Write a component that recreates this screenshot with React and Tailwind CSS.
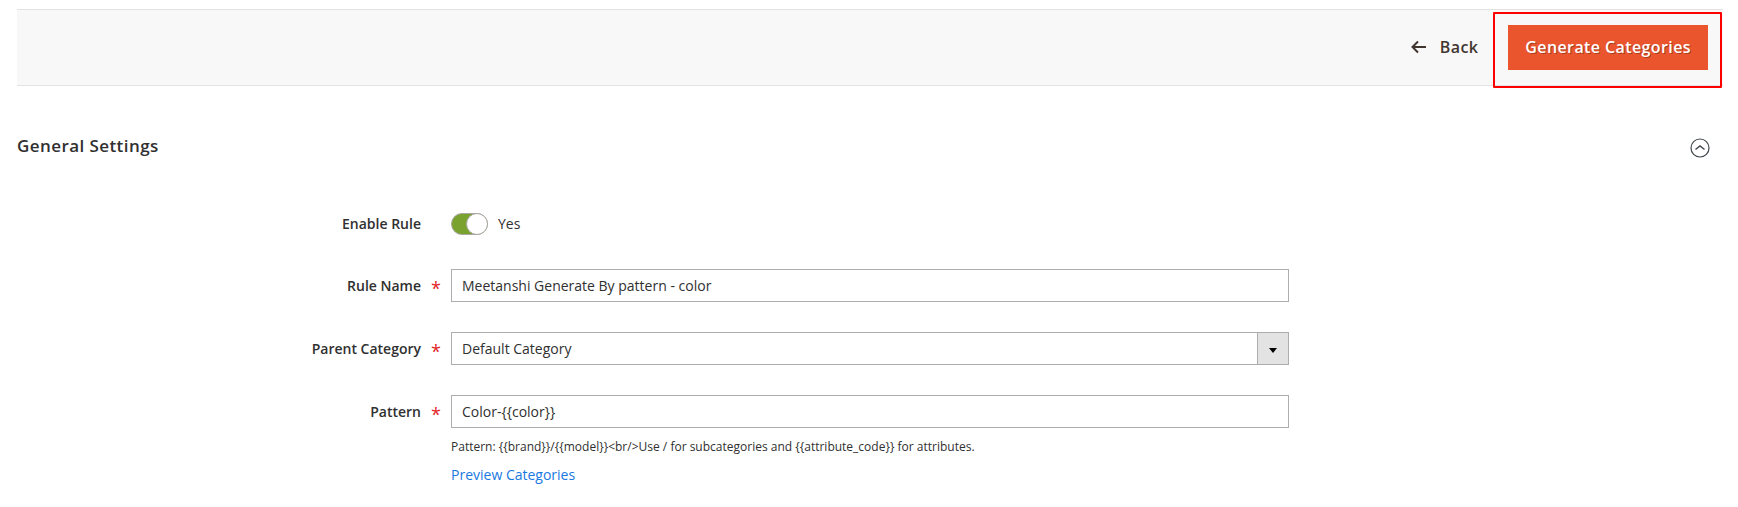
import React, { useState } from "react";

// Label column, control column and an empty column on the right
const Field = ({ id, label, required, children }) => (
  <div className="grid grid-cols-[217fr_419fr_217fr]">
    <label
      htmlFor={id}
      className={`flex items-center justify-end text-sm font-semibold ${
        required ? "h-[33px]" : "h-[30px]"
      }`}
    >
      {label}
      <span className="w-[30px] pt-1 text-center text-lg font-medium text-[#e22626]">
        {required ? "*" : ""}
      </span>
    </label>
    <div>{children}</div>
  </div>
);

const inputClass =
  "block h-[33px] w-full rounded-none border border-[#adadad] bg-white px-[10px] text-sm text-[#303030] focus:border-[#007bdb] focus:outline-none";

const App = () => {
  const [open, setOpen] = useState(true);
  const [enabled, setEnabled] = useState(true);
  const [name, setName] = useState("Meetanshi Generate By pattern - color");
  const [pattern, setPattern] = useState("Color-{{color}}");

  return (
    <div className="min-h-screen bg-white pt-[9px] pr-[15px] pb-6 pl-[17px] font-['Open_Sans',sans-serif] text-[#303030]">
      {/* Page actions */}
      <header className="flex items-center justify-end gap-[30px] border-y border-[#e3e3e3] bg-[#f8f8f8] py-[15px] pr-[15px]">
        <button
          type="button"
          className="flex items-center gap-[14px] pb-[2px] text-base font-semibold tracking-wide text-[#41362f]"
        >
          <svg width="15" height="14" viewBox="0 0 15 14" fill="none" stroke="currentColor" strokeWidth="2">
            <path d="M7 1.500 1.500 7 7 12.500M1.500 7H15" />
          </svg>
          Back
        </button>
        <div className="relative">
          <button
            type="button"
            className="block h-[45px] bg-[#eb552d] px-[17px] pb-[2px] text-base font-semibold tracking-wide text-white [text-shadow:1px_1px_0_rgba(0,0,0,0.3)]"
          >
            Generate Categories
          </button>
          <div className="pointer-events-none absolute -top-[13px] -right-[14px] -bottom-[18px] -left-[15px] rounded-[1px] border-2 border-[#ff0000]" />
        </div>
      </header>

      {/* General settings */}
      <section>
        <div className="mt-12 flex items-center justify-between pr-[13px]">
          <h2 className="text-[17px] leading-6 font-semibold tracking-wide">
            General Settings
          </h2>
          <button
            type="button"
            aria-label="Toggle General Settings"
            className="pt-1"
            onClick={() => setOpen(!open)}
          >
            <svg width="20" height="20" viewBox="0 0 20 20" fill="none" stroke="#41474b">
              <circle cx="10" cy="10" r="9" strokeWidth="1.2" />
              <path d="M5.500 11.500 10 8l4.500 3.500" strokeWidth="1.400" />
            </svg>
          </button>
        </div>

        {open && (
          <div className="mt-[51px] flex flex-col gap-[30px]">
            <Field id="enable" label="Enable Rule">
              <div className="flex h-[30px] items-center gap-[10px] text-sm">
                <label className="relative block h-[22px] w-[37px] cursor-pointer">
                  <input
                    id="enable"
                    type="checkbox"
                    checked={enabled}
                    onChange={(e) => setEnabled(e.target.checked)}
                    className="peer block h-[22px] w-[37px] appearance-none rounded-full border border-[#aaa6a0] bg-[#e3e3e3] checked:bg-[#79a22e]"
                  />
                  <span className="pointer-events-none absolute top-0 left-0 size-[22px] rounded-full border border-[#aaa6a0] bg-white peer-checked:left-[15px]" />
                </label>
                <span>{enabled ? "Yes" : "No"}</span>
              </div>
            </Field>

            <Field id="name" label="Rule Name" required>
              <input
                id="name"
                type="text"
                value={name}
                onChange={(e) => setName(e.target.value)}
                className={inputClass}
              />
            </Field>

            <Field id="parent" label="Parent Category" required>
              <div className="relative">
                <select id="parent" className={`${inputClass} appearance-none`}>
                  <option>Default Category</option>
                </select>
                <span className="pointer-events-none absolute inset-y-0 right-0 flex w-8 items-center justify-center border border-[#adadad] bg-[#e3e3e3]">
                  <svg className="mt-[3px]" width="8" height="5" viewBox="0 0 8 5">
                    <path d="M0 0h8L4 5z" fill="#000" />
                  </svg>
                </span>
              </div>
            </Field>

            <Field id="pattern" label="Pattern" required>
              <input
                id="pattern"
                type="text"
                value={pattern}
                onChange={(e) => setPattern(e.target.value)}
                className={inputClass}
              />
              <p className="mt-[10px] text-xs leading-[18px]">
                {"Pattern: {{brand}}/{{model}}<br/>Use / for subcategories and {{attribute_code}} for attributes."}
              </p>
              <a
                href="#preview"
                className="mt-[9px] inline-block text-sm leading-5 text-[#1979e0] hover:underline"
              >
                Preview Categories
              </a>
            </Field>
          </div>
        )}
      </section>
    </div>
  );
};

export default App;
